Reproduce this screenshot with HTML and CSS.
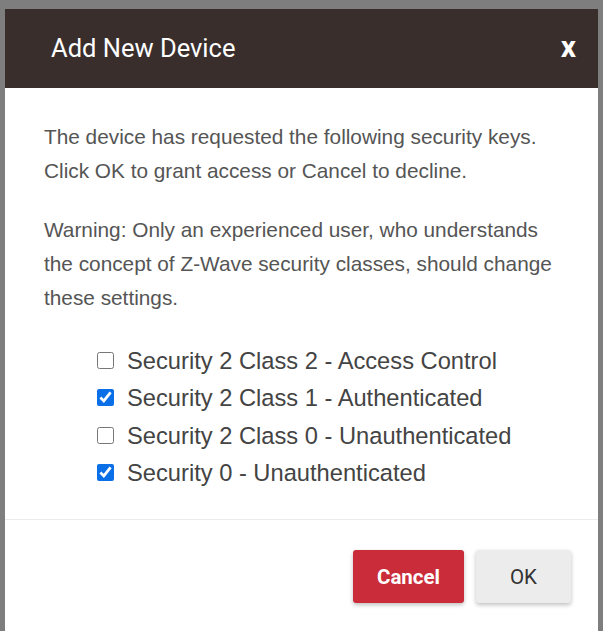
FILE: index.html
```html
<!DOCTYPE html>
<html lang="en">
<head>
  <meta charset="UTF-8" />
  <meta name="viewport" content="width=device-width, initial-scale=1.0" />
  <title>Add New Device</title>
  <link rel="stylesheet" href="styles.css">
</head>
<body>
  <div class="backdrop">
    <div class="modal">
      <header class="modal-header">
        <h2>Add New Device</h2>
        <span class="close">x</span>
      </header>
      <div class="modal-body">
        <p>The device has requested the following security keys. Click OK to grant access or Cancel to decline.</p>
        <p>Warning: Only an experienced user, who understands the concept of Z-Wave security classes, should change these settings.</p>
        <ul class="keys">
          <li><label><input type="checkbox" /> Security 2 Class 2 - Access Control</label></li>
          <li><label><input type="checkbox" checked /> Security 2 Class 1 - Authenticated</label></li>
          <li><label><input type="checkbox" /> Security 2 Class 0 - Unauthenticated</label></li>
          <li><label><input type="checkbox" checked /> Security 0 - Unauthenticated</label></li>
        </ul>
      </div>
      <footer class="modal-footer">
        <button class="btn btn-cancel">Cancel</button>
        <button class="btn btn-ok">OK</button>
      </footer>
    </div>
  </div>
</body>
</html>
```

FILE: styles.css
```css
* { box-sizing: border-box; margin: 0; padding: 0; }
html, body { height: 100%; overflow: hidden; }
body { font-family: "Liberation Sans", Arial, sans-serif; background: #7e7e7e; }
.backdrop {
  padding: 9px 5px 0;
  height: 100%;
}
.modal {
  background: white;
  height: 100%;
}
.modal-header {
  background: #392e2c;
  height: 79px;
  padding: 0 22px 0 46px;
  display: flex;
  align-items: center;
  justify-content: space-between;
  color: white;
}
.modal-header h2 {
  font-family: Roboto, sans-serif;
  font-weight: 400;
  font-size: 25.5px;
  padding-bottom: 1px;
}
.close {
  font-family: Roboto, sans-serif;
  font-weight: 700;
  font-size: 30px;
  padding-bottom: 4px;
}
.modal-body {
  padding: 32px 38px 0 39px;
  color: #555;
  height: 432px;
  border-bottom: 1px solid #e9ecef;
}
.modal-body p {
  font-size: 20.8px;
  line-height: 34px;
  margin-bottom: 25px;
}
.keys {
  list-style: none;
  padding-left: 53px;
  margin-top: 28px;
}
.keys li {
  font-size: 23.7px;
  line-height: 37.3px;
  color: #444;
}
.keys label {
  display: flex;
  align-items: center;
  gap: 13px;
}
.keys input {
  width: 17px;
  height: 17px;
  accent-color: #0b6fe8;
  margin-top: -2px;
}
.modal-footer {
  display: flex;
  justify-content: flex-end;
  gap: 12px;
  padding: 30px 27px 0 0;
}
.btn {
  font-family: Roboto, sans-serif;
  font-size: 20.5px;
  height: 53px;
  border: none;
  border-radius: 3px;
  cursor: pointer;
  box-shadow: 0 2px 4px rgba(0, 0, 0, 0.25);
}
.btn-cancel {
  background: #cb2c3a;
  color: white;
  font-weight: 700;
  width: 111px;
}
.btn-ok {
  background: #ececec;
  color: #333;
  width: 95px;
}
```
